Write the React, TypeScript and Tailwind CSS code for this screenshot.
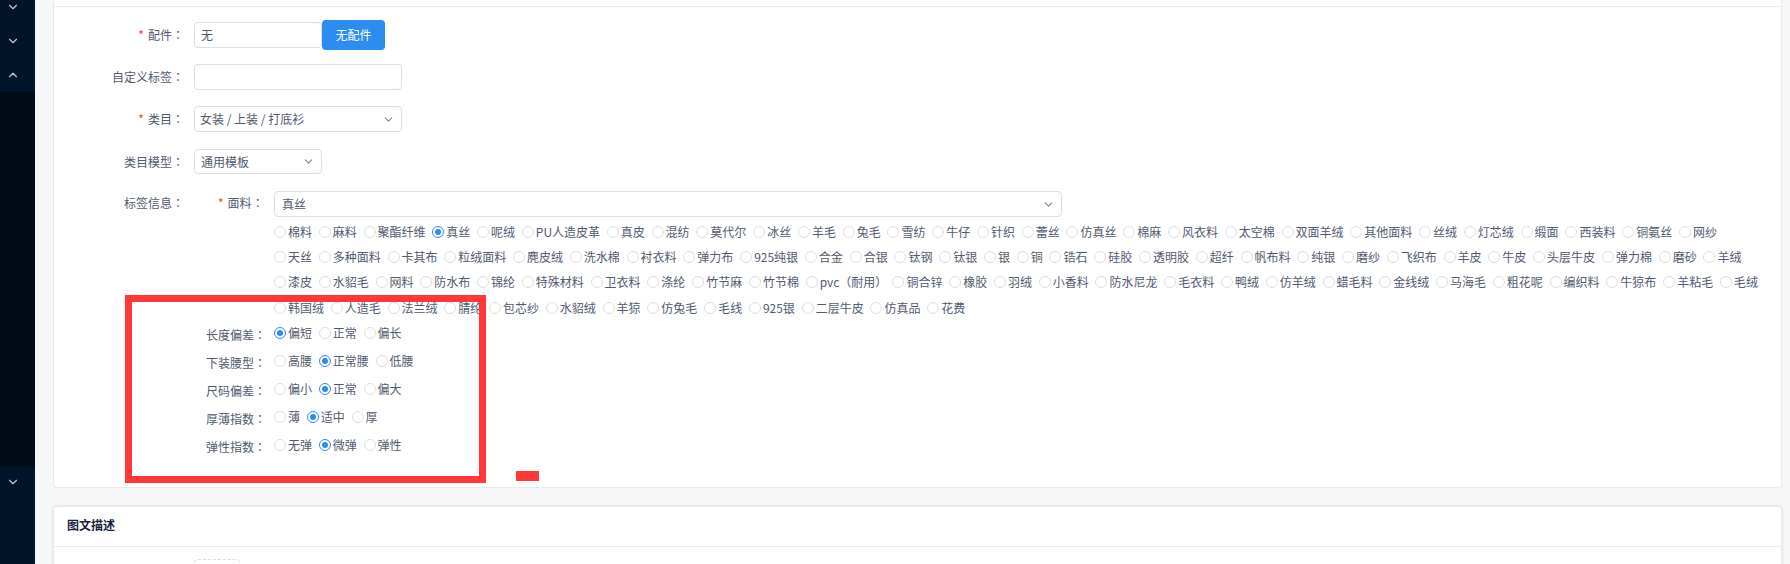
import { ChevronDown, ChevronUp } from "lucide-react";

const rows: string[][] = [
  "棉料 麻料 聚酯纤维 真丝 呢绒 PU人造皮革 真皮 混纺 莫代尔 冰丝 羊毛 兔毛 雪纺 牛仔 针织 蕾丝 仿真丝 棉麻 风衣料 太空棉 双面羊绒 其他面料 丝绒 灯芯绒 缎面 西装料 铜氨丝 网纱".split(" "),
  "天丝 多种面料 卡其布 粒绒面料 麂皮绒 洗水棉 衬衣料 弹力布 925纯银 合金 合银 钛钢 钛银 银 铜 锆石 硅胶 透明胶 超纤 帆布料 纯银 磨纱 飞织布 羊皮 牛皮 头层牛皮 弹力棉 磨砂 羊绒".split(" "),
  "漆皮 水貂毛 网料 防水布 锦纶 特殊材料 卫衣料 涤纶 竹节麻 竹节棉 pvc（耐用） 铜合锌 橡胶 羽绒 小香料 防水尼龙 毛衣料 鸭绒 仿羊绒 蜡毛料 金线绒 马海毛 粗花呢 编织料 牛猄布 羊粘毛 毛绒".split(" "),
  "韩国绒 人造毛 法兰绒 腈纶 包芯纱 水貂绒 羊猄 仿兔毛 毛线 925银 二层牛皮 仿真品 花费".split(" "),
];

const extras: { label: string; options: string[]; checked: string }[] = [
  { label: "长度偏差", options: ["偏短", "正常", "偏长"], checked: "偏短" },
  { label: "下装腰型", options: ["高腰", "正常腰", "低腰"], checked: "正常腰" },
  { label: "尺码偏差", options: ["偏小", "正常", "偏大"], checked: "正常" },
  { label: "厚薄指数", options: ["薄", "适中", "厚"], checked: "适中" },
  { label: "弹性指数", options: ["无弹", "微弹", "弹性"], checked: "微弹" },
];

function Colon() {
  return <span className="[font-family:'Noto_Sans_CJK_TC',sans-serif]">：</span>;
}

function Radio({ text, checked }: { text: string; checked?: boolean }) {
  return (
    <span className="flex items-center gap-[2px] whitespace-nowrap">
      <span
        className={
          checked
            ? "flex h-[12px] w-[12px] items-center justify-center rounded-full border border-[#2d8cf0] bg-white"
            : "h-[12px] w-[12px] rounded-full border border-[#dcdee2] bg-white"
        }
      >
        {checked && <span className="h-[6px] w-[6px] rounded-full bg-[#2d8cf0]" />}
      </span>
      <span className={text.startsWith("pvc") ? "w-[66px] [font-family:'Noto_Sans_CJK_TC',sans-serif]" : ""}>{text}</span>
    </span>
  );
}

function Label({ text, required }: { text: string; required?: boolean }) {
  return (
    <div className="w-[140px] shrink-0 whitespace-nowrap pr-[10px] text-right">
      {required && <span className="mr-[4px] text-[#ed4014]">*</span>}
      {text}
      <Colon />
    </div>
  );
}

function Select({ text, className }: { text: string; className: string }) {
  return (
    <div className={"flex items-center justify-between rounded-[4px] border border-[#dcdee2] bg-white pl-[5px] pr-[6px] " + className}>
      <span>{text}</span>
      <ChevronDown size={13} color="#808695" />
    </div>
  );
}

export default function App() {
  return (
    <div className="relative flex h-[564px] w-[1790px] overflow-hidden bg-[#f5f7f9] text-[12px] leading-[18px] text-[#515a6e] [font-family:'Noto_Sans_CJK_SC','Noto_Sans',sans-serif]">
      <aside className="flex w-[35px] shrink-0 flex-col bg-[#000c17] text-[#c5c8ce]">
        <div className="flex h-[92px] flex-col items-center bg-[#001529] pr-[9px]">
          <div className="-mt-[10px] flex h-[34px] items-center"><ChevronDown size={14} /></div>
          <div className="flex h-[34px] items-center"><ChevronDown size={14} /></div>
          <div className="flex h-[34px] items-center"><ChevronUp size={14} /></div>
        </div>
        <div className="h-[374px]" />
        <div className="flex flex-1 flex-col items-center bg-[#001529] pr-[9px] pt-[9px]">
          <ChevronDown size={14} />
        </div>
      </aside>

      <main className="ml-[18px] flex w-[1729px] flex-col">
        <section className="h-[488px] shrink-0 rounded-b-[4px] border-x border-b border-[#e8eaec] bg-white">
          <div className="h-[7px] border-b border-[#e8eaec]" />
          <div className="flex flex-col pt-[13px]">
            <div className="flex items-center">
              <Label text="配件" required />
              <div className="flex h-[26px] w-[128px] items-center rounded-[4px] border border-[#dcdee2] px-[6px]">无</div>
              <button className="flex h-[30px] w-[63px] items-center justify-center rounded-[4px] bg-[#2d8cf0] text-white">无配件</button>
            </div>
            <div className="mt-[14px] flex items-center">
              <Label text="自定义标签" />
              <div className="h-[26px] w-[208px] rounded-[4px] border border-[#dcdee2]" />
            </div>
            <div className="mt-[16px] flex items-center">
              <Label text="类目" required />
              <Select text="女装 / 上装 / 打底衫" className="h-[26px] w-[208px]" />
            </div>
            <div className="mt-[17px] flex items-center">
              <Label text="类目模型" />
              <Select text="通用模板" className="h-[25px] w-[128px] !pl-[6px]" />
            </div>
            <div className="mt-[17px] flex items-start">
              <div className="flex w-[220px] shrink-0 items-center pt-[3px]">
                <Label text="标签信息" />
                <div className="flex-1 whitespace-nowrap pl-[24px]">
                  <span className="mr-[4px] text-[#ed4014]">*</span>面料<Colon />
                </div>
              </div>
              <div className="flex flex-col">
                <Select text="真丝" className="h-[26px] w-[788px] !pl-[7px]" />
                <div className="mt-[2px] flex flex-col">
                  {rows.map((row, i) => (
                    <div key={i} className="flex h-[25.3px] items-center gap-[6.75px]">
                      {row.map((t) => (
                        <Radio key={t} text={t} checked={t === "真丝"} />
                      ))}
                    </div>
                  ))}
                </div>
              </div>
            </div>
            <div className="-mt-px flex flex-col">
              {extras.map((e) => (
                <div key={e.label} className="flex h-[28px] items-center">
                  <div className="flex w-[220px] shrink-0 justify-end pr-[8px] pt-[3px]">
                    {e.label}
                    <Colon />
                  </div>
                  <div className="flex items-center gap-[6.75px]">
                    {e.options.map((o) => (
                      <Radio key={o} text={o} checked={o === e.checked} />
                    ))}
                  </div>
                </div>
              ))}
            </div>
          </div>
        </section>

        <section className="mt-[18px] flex-1 rounded-t-[4px] border-x border-t border-[#e8eaec] bg-white shadow-[0_0_3px_rgba(0,0,0,0.12)]">
          <div className="flex h-[40px] items-center border-b border-[#e8eaec] pb-[3px] pl-[13px] font-bold text-[#17233d]">图文描述</div>
          <div className="ml-[140px] mt-[12px] h-[20px] w-[46px] rounded-[4px] border border-dashed border-[#dcdee2]" />
        </section>
      </main>

      <div className="absolute left-[125px] top-[295px] h-[188px] w-[361px] border-[7px] border-[#ff3838]" />
      <div className="absolute left-[516px] top-[471px] h-[10px] w-[23px] bg-[#ff3838]" />
    </div>
  );
}
